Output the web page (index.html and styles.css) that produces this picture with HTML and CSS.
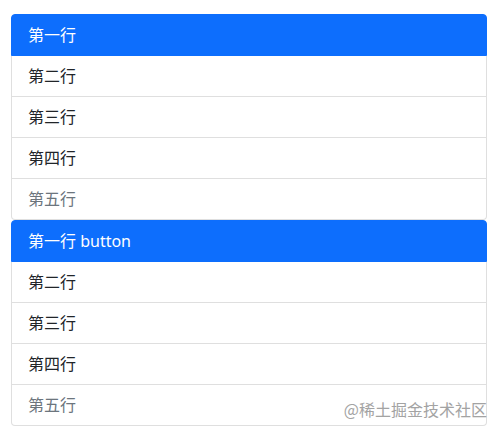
FILE: index.html
```html
<!DOCTYPE html>
<html lang="zh-CN">
<head>
    <meta charset="UTF-8">
    <meta name="viewport" content="width=device-width, initial-scale=1.0">
    <title>List group</title>
    <link rel="stylesheet" href="styles.css">
</head>
<body>
    <div class="container">
        <ul class="list-group">
            <li class="list-group-item active">第一行</li>
            <li class="list-group-item">第二行</li>
            <li class="list-group-item">第三行</li>
            <li class="list-group-item">第四行</li>
            <li class="list-group-item disabled">第五行</li>
        </ul>
        <div class="list-group">
            <button type="button" class="list-group-item active">第一行 button</button>
            <button type="button" class="list-group-item">第二行</button>
            <button type="button" class="list-group-item">第三行</button>
            <button type="button" class="list-group-item">第四行</button>
            <button type="button" class="list-group-item disabled" disabled>第五行</button>
        </div>
    </div>
    <div class="watermark">@稀土掘金技术社区</div>
</body>
</html>
```

FILE: styles.css
```css
body {
    font-family: "Noto Sans", "Noto Sans CJK SC", sans-serif;
    font-size: 16px;
    color: #212529;
    background: #fff;
    margin: 0;
    padding: 14px 14px 0 11px;
}
.container {
    display: flex;
    flex-direction: column;
}
.list-group {
    display: flex;
    flex-direction: column;
    margin: 0;
    padding: 0;
    list-style: none;
    border-radius: 4px;
}
.list-group-item {
    display: block;
    width: 100%;
    box-sizing: border-box;
    padding: 8px 16px;
    height: 41px;
    line-height: 24px;
    font-family: inherit;
    font-size: 16px;
    text-align: left;
    color: #212529;
    background: #fff;
    border: 1px solid #dfdfdf;
    border-top-width: 0;
    margin: 0;
}
.list-group-item:first-child {
    border-top-width: 1px;
    height: 42px;
    border-top-left-radius: 4px;
    border-top-right-radius: 4px;
}
.list-group-item:last-child {
    border-bottom-left-radius: 4px;
    border-bottom-right-radius: 4px;
}
.list-group-item.active {
    color: #fff;
    background: #0d6efd;
    border-color: #0d6efd;
}
.list-group-item.disabled {
    color: #6c757d;
}
.watermark {
    position: absolute;
    right: 14px;
    top: 397px;
    font-family: "Noto Sans CJK SC", sans-serif;
    font-size: 16px;
    color: #a3a3a3;
}
```
